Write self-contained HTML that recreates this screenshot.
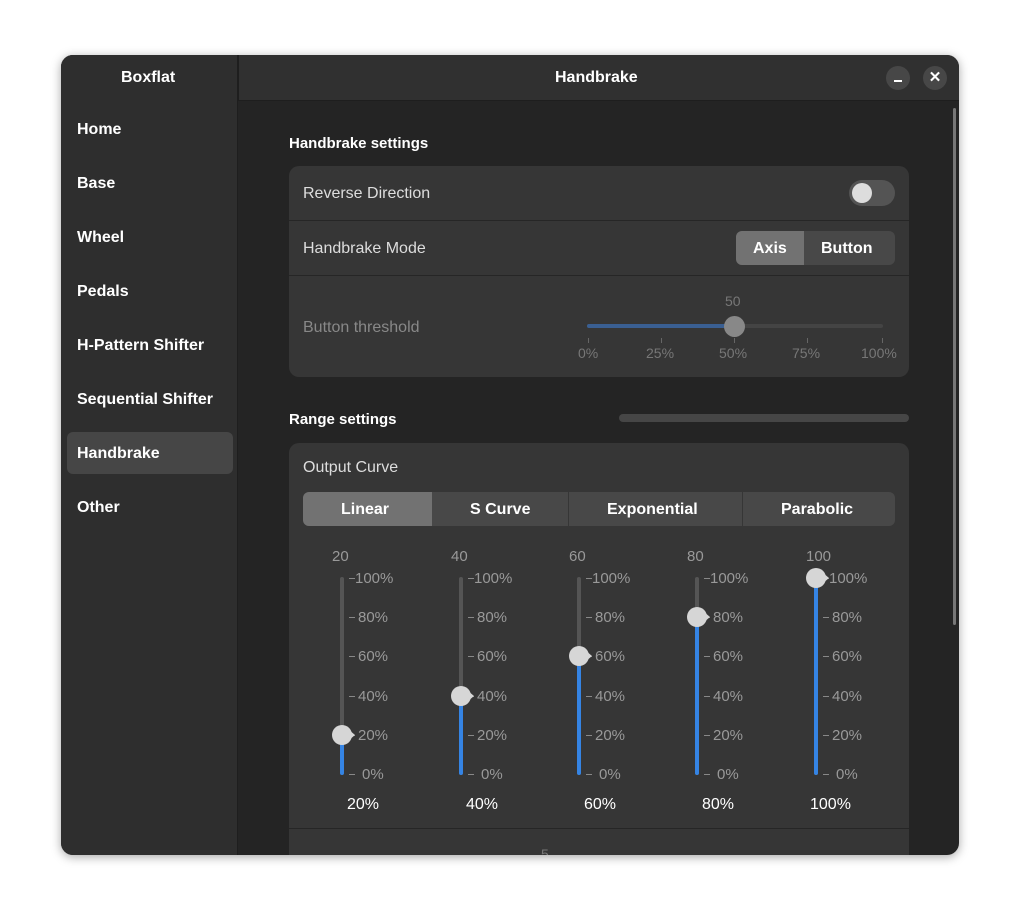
<!DOCTYPE html>
<html><head><style>
*{box-sizing:border-box;margin:0;padding:0}
body{width:1020px;height:922px;background:#fff;font-family:"Liberation Sans",sans-serif;position:relative;overflow:hidden}
.win{position:absolute;left:61px;top:55px;width:898px;height:800px;border-radius:12px;overflow:hidden;background:#242424;box-shadow:0 2px 10px rgba(0,0,0,.35)}
.side{position:absolute;left:0;top:0;width:177px;height:800px;background:#2e2e2e;border-right:1px solid #1e1e1e}
.hdr{position:absolute;left:0;top:0;width:898px;height:46px;background:#303030;border-bottom:1px solid #1e1e1e}
.t{position:absolute;color:#fff;font-weight:bold;font-size:16px;white-space:nowrap}
.r{position:absolute;color:#ddd;font-size:16px;white-space:nowrap}
.card{position:absolute;background:#363636;border-radius:10px}
.a{position:absolute}
.g{color:#777;font-size:14px;position:absolute;white-space:nowrap}
.lab{position:absolute;color:#999;font-size:15px;white-space:nowrap}
</style></head><body>
<div class="win">
<div class="hdr"></div>
<div class="side"></div>
<div class="a" style="left:177px;top:0;width:1px;height:46px;background:#1e1e1e"></div>
<div class="t" style="left:60px;top:14px">Boxflat</div>
<div class="t" style="left:494px;top:14px">Handbrake</div>
<div class="a" style="left:825px;top:11px;width:24px;height:24px;border-radius:12px;background:#474747"></div>
<div class="a" style="left:833px;top:25px;width:8px;height:2px;background:#fff"></div>
<div class="a" style="left:862px;top:11px;width:24px;height:24px;border-radius:12px;background:#474747;color:#fff;font-size:15px;font-weight:bold;text-align:center;line-height:24px">✕</div>
<div class="a" style="left:6px;top:377px;width:166px;height:42px;border-radius:6px;background:#464646"></div>
<div class="t" style="left:16px;top:66px">Home</div>
<div class="t" style="left:16px;top:120px">Base</div>
<div class="t" style="left:16px;top:174px">Wheel</div>
<div class="t" style="left:16px;top:228px">Pedals</div>
<div class="t" style="left:16px;top:282px">H-Pattern Shifter</div>
<div class="t" style="left:16px;top:336px">Sequential Shifter</div>
<div class="t" style="left:16px;top:390px">Handbrake</div>
<div class="t" style="left:16px;top:444px">Other</div>
<div class="a" style="left:892px;top:53px;width:3px;height:517px;border-radius:2px;background:#777"></div>

<div class="t" style="left:228px;top:80px;font-size:15px">Handbrake settings</div>
<div class="card" style="left:228px;top:111px;width:620px;height:211px"></div>
<div class="a" style="left:228px;top:165px;width:620px;height:1px;background:#262626"></div>
<div class="a" style="left:228px;top:220px;width:620px;height:1px;background:#262626"></div>
<div class="r" style="left:242px;top:130px">Reverse Direction</div>
<div class="a" style="left:788px;top:125px;width:46px;height:26px;border-radius:13px;background:#545454"></div>
<div class="a" style="left:791px;top:128px;width:20px;height:20px;border-radius:10px;background:#ddd"></div>
<div class="r" style="left:242px;top:185px">Handbrake Mode</div>
<div class="a" style="left:675px;top:176px;width:159px;height:34px;border-radius:6px;background:#484848;overflow:hidden"><div style="width:68px;height:34px;background:#727272"></div></div>
<div class="t" style="left:692px;top:185px">Axis</div>
<div class="t" style="left:760px;top:185px">Button</div>
<div class="lab" style="left:242px;top:264px;color:#888;font-size:16px">Button threshold</div>
<div class="g" style="left:664px;top:238px">50</div>
<div class="a" style="left:526px;top:269px;width:296px;height:4px;border-radius:2px;background:#444"></div>
<div class="a" style="left:526px;top:269px;width:148px;height:4px;border-radius:2px;background:#3a5f92"></div>
<div class="a" style="left:663px;top:261px;width:21px;height:21px;border-radius:50%;background:#888"></div>
<div class="a" style="left:527px;top:283px;width:1px;height:5px;background:#666"></div>
<div class="a" style="left:600px;top:283px;width:1px;height:5px;background:#666"></div>
<div class="a" style="left:673px;top:283px;width:1px;height:5px;background:#666"></div>
<div class="a" style="left:746px;top:283px;width:1px;height:5px;background:#666"></div>
<div class="a" style="left:821px;top:283px;width:1px;height:5px;background:#666"></div>
<div class="g" style="left:517px;top:290px">0%</div>
<div class="g" style="left:585px;top:290px">25%</div>
<div class="g" style="left:658px;top:290px">50%</div>
<div class="g" style="left:731px;top:290px">75%</div>
<div class="g" style="left:800px;top:290px">100%</div>

<div class="t" style="left:228px;top:356px;font-size:15px">Range settings</div>
<div class="a" style="left:558px;top:359px;width:290px;height:8px;border-radius:4px;background:#464646"></div>
<div class="card" style="left:228px;top:388px;width:620px;height:430px"></div>
<div class="r" style="left:242px;top:404px">Output Curve</div>
<div class="a" style="left:242px;top:437px;width:592px;height:34px;border-radius:6px;background:#484848;overflow:hidden"><div style="width:129px;height:34px;background:#727272"></div></div>
<div class="a" style="left:507px;top:437px;width:1px;height:34px;background:#363636"></div>
<div class="a" style="left:681px;top:437px;width:1px;height:34px;background:#363636"></div>
<div class="t" style="left:280px;top:446px">Linear</div>
<div class="t" style="left:409px;top:446px">S Curve</div>
<div class="t" style="left:546px;top:446px">Exponential</div>
<div class="t" style="left:720px;top:446px">Parabolic</div>
<div class="a" style="left:228px;top:773px;width:620px;height:1px;background:#262626"></div>
<div class="g" style="left:480px;top:791px;font-size:14px">5</div>
<div id="vs"></div>
</div>
<script>
(function(){
var xs=[281,400,518,636,755],vals=[20,40,60,80,100],h='';
for(var i=0;i<5;i++){var x=xs[i],v=vals[i];var tp=523,bt=719,len=bt-tp;var ky=Math.round(bt-len*v/100);
h+='<div class="lab" style="left:'+(x-10)+'px;top:493px">'+v+'</div>';
h+='<div class="a" style="left:'+(x-2)+'px;top:'+(tp-1)+'px;width:4px;height:'+(len+2)+'px;border-radius:2px;background:#555"></div>';
h+='<div class="a" style="left:'+(x-2)+'px;top:'+ky+'px;width:4px;height:'+(bt+1-ky)+'px;border-radius:2px;background:#3584e4"></div>';
for(var k=0;k<=5;k++){var y=Math.round(bt-len*k/5);var t=(k*20)+'%';
h+='<div class="a" style="left:'+(x+7)+'px;top:'+y+'px;width:6px;height:1px;background:#888"></div>';
h+='<div class="lab" style="left:'+(x+(k==5?13:(k==0?20:16)))+'px;top:'+(y-8)+'px">'+t+'</div>';}
h+='<div class="a" style="left:'+(x-10)+'px;top:'+(ky-10)+'px;width:20px;height:20px;border-radius:10px;background:#d6d6d6"></div>';
h+='<div class="a" style="left:'+(x+6)+'px;top:'+(ky-6)+'px;width:0;height:0;border-top:6px solid transparent;border-bottom:6px solid transparent;border-left:7px solid #d6d6d6"></div>';
h+='<div class="r" style="left:'+(x+(v==100?-6:5))+'px;top:741px;color:#fff;font-size:16px">'+v+'%</div>';}
document.getElementById('vs').outerHTML=h;
})();
</script>
</body></html>
